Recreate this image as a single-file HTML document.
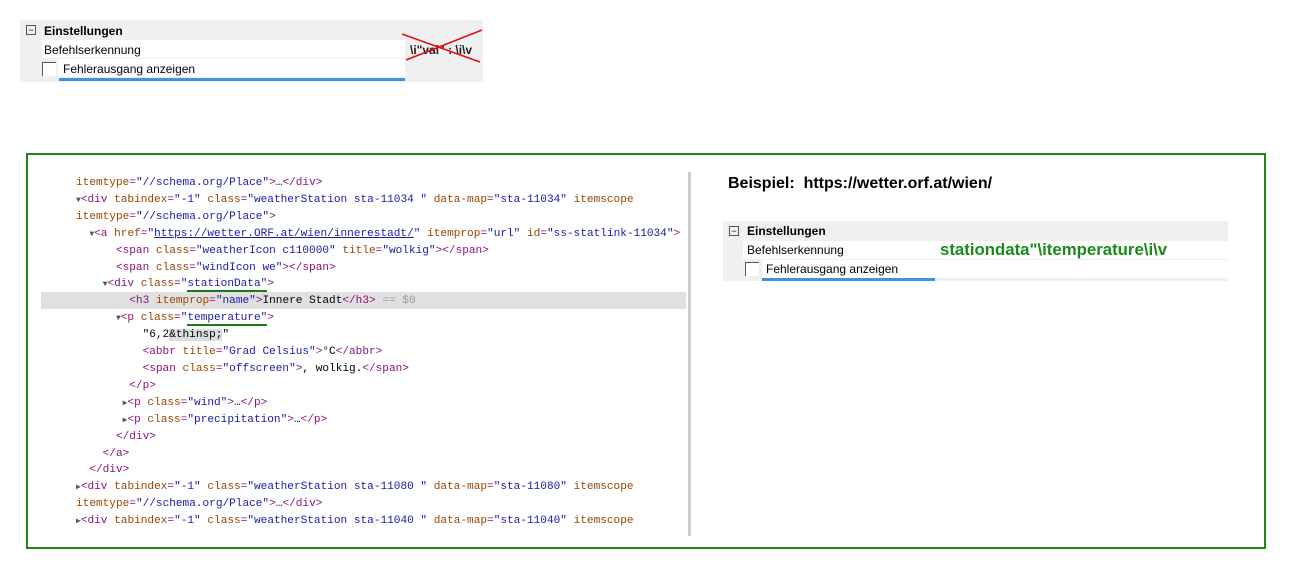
<!DOCTYPE html>
<html><head><meta charset="utf-8"><style>
body{margin:0;width:1290px;height:574px;background:#fff;position:relative;overflow:hidden;font-family:"Liberation Sans",sans-serif}
.a{position:absolute}
.m{font-family:"Liberation Mono",monospace;font-size:11.1px;line-height:16.9px;white-space:pre;color:#000}
.m span{line-height:0}
.t{color:#881280}.n{color:#994500}.v{color:#1a1aa6}.g{color:#999}
.tri{font-size:8px;color:#555}
.ps{font-size:12px;color:#000}
</style></head><body>
<div class="a" style="left:20px;top:20px;width:463px;height:62px;background:#f0f0f0"></div>
<div class="a" style="left:42px;top:40px;width:363px;height:18px;background:#fff"></div>
<div class="a" style="left:58px;top:59px;width:347px;height:18px;background:#fff"></div>
<div class="a" style="left:26px;top:25px;width:8px;height:8px;border:1px solid #555;font-size:9px;line-height:8px;text-align:center">−</div>
<div class="a ps" style="left:44px;top:24px;font-weight:bold">Einstellungen</div>
<div class="a ps" style="left:44px;top:43px">Befehlserkennung</div>
<div class="a" style="left:42px;top:62px;width:13px;height:13px;border:1px solid #555;border-right:none;border-bottom:none;background:#fff"></div>
<div class="a ps" style="left:63px;top:62px">Fehlerausgang anzeigen</div>
<div class="a" style="left:59px;top:78px;width:346px;height:3px;background:#3b95e0"></div>
<div class="a ps" style="left:410px;top:43px;font-weight:bold;color:#222">\i"val" : \i\v</div>
<svg class="a" style="left:400px;top:28px" width="85" height="36"><line x1="2" y1="6" x2="80" y2="34" stroke="#e01010" stroke-width="1.5"/><line x1="6" y1="32" x2="82" y2="2" stroke="#e01010" stroke-width="1.5"/></svg>

<div class="a" style="left:26px;top:153px;width:1236px;height:392px;border:2px solid #1a8a1a"></div>
<div class="a" style="left:688px;top:172px;width:3px;height:364px;background:#ccc"></div>
<div class="a" style="left:41px;top:292px;width:645px;height:17px;background:#e0e0e0"></div>
<div class="a m" style="left:76px;top:175px"><span class="n">itemtype</span><span class="t">=</span><span class="v">"//schema.org/Place"</span><span class="t">&gt;</span>…<span class="t">&lt;/div&gt;</span>
<span class="tri">▼</span><span class="t">&lt;div </span><span class="n">tabindex</span><span class="t">=</span><span class="v">"-1"</span> <span class="n">class</span><span class="t">=</span><span class="v">"weatherStation sta-11034 "</span> <span class="n">data-map</span><span class="t">=</span><span class="v">"sta-11034"</span> <span class="n">itemscope</span>
<span class="n">itemtype</span><span class="t">=</span><span class="v">"//schema.org/Place"</span><span class="t">&gt;</span>
  <span class="tri">▼</span><span class="t">&lt;a </span><span class="n">href</span><span class="t">=</span><span class="v">"<u>https://wetter.ORF.at/wien/innerestadt/</u>"</span> <span class="n">itemprop</span><span class="t">=</span><span class="v">"url"</span> <span class="n">id</span><span class="t">=</span><span class="v">"ss-statlink-11034"</span><span class="t">&gt;</span>
      <span class="t">&lt;span </span><span class="n">class</span><span class="t">=</span><span class="v">"weatherIcon c110000"</span> <span class="n">title</span><span class="t">=</span><span class="v">"wolkig"</span><span class="t">&gt;&lt;/span&gt;</span>
      <span class="t">&lt;span </span><span class="n">class</span><span class="t">=</span><span class="v">"windIcon we"</span><span class="t">&gt;&lt;/span&gt;</span>
    <span class="tri">▼</span><span class="t">&lt;div </span><span class="n">class</span><span class="t">=</span><span class="v">"<span style="border-bottom:2px solid #1a7a1a">stationData"</span></span><span class="t">&gt;</span>
        <span class="t">&lt;h3 </span><span class="n">itemprop</span><span class="t">=</span><span class="v">"name"</span><span class="t">&gt;</span>Innere Stadt<span class="t">&lt;/h3&gt;</span> <span class="g">== $0</span>
      <span class="tri">▼</span><span class="t">&lt;p </span><span class="n">class</span><span class="t">=</span><span class="v">"<span style="border-bottom:2px solid #1a7a1a">temperature"</span></span><span class="t">&gt;</span>
          "6,2<span style="background:#ddd">&amp;thinsp;</span>"
          <span class="t">&lt;abbr </span><span class="n">title</span><span class="t">=</span><span class="v">"Grad Celsius"</span><span class="t">&gt;</span>°C<span class="t">&lt;/abbr&gt;</span>
          <span class="t">&lt;span </span><span class="n">class</span><span class="t">=</span><span class="v">"offscreen"</span><span class="t">&gt;</span>, wolkig.<span class="t">&lt;/span&gt;</span>
        <span class="t">&lt;/p&gt;</span>
       <span class="tri">▶</span><span class="t">&lt;p </span><span class="n">class</span><span class="t">=</span><span class="v">"wind"</span><span class="t">&gt;</span>…<span class="t">&lt;/p&gt;</span>
       <span class="tri">▶</span><span class="t">&lt;p </span><span class="n">class</span><span class="t">=</span><span class="v">"precipitation"</span><span class="t">&gt;</span>…<span class="t">&lt;/p&gt;</span>
      <span class="t">&lt;/div&gt;</span>
    <span class="t">&lt;/a&gt;</span>
  <span class="t">&lt;/div&gt;</span>
<span class="tri">▶</span><span class="t">&lt;div </span><span class="n">tabindex</span><span class="t">=</span><span class="v">"-1"</span> <span class="n">class</span><span class="t">=</span><span class="v">"weatherStation sta-11080 "</span> <span class="n">data-map</span><span class="t">=</span><span class="v">"sta-11080"</span> <span class="n">itemscope</span>
<span class="n">itemtype</span><span class="t">=</span><span class="v">"//schema.org/Place"</span><span class="t">&gt;</span>…<span class="t">&lt;/div&gt;</span>
<span class="tri">▶</span><span class="t">&lt;div </span><span class="n">tabindex</span><span class="t">=</span><span class="v">"-1"</span> <span class="n">class</span><span class="t">=</span><span class="v">"weatherStation sta-11040 "</span> <span class="n">data-map</span><span class="t">=</span><span class="v">"sta-11040"</span> <span class="n">itemscope</span></div>

<div class="a" style="left:728px;top:175px;font-size:16px;font-weight:bold;color:#000">Beispiel:&nbsp; https://wetter.orf.at/wien/</div>
<div class="a" style="left:723px;top:221px;width:505px;height:60px;background:#f0f0f0"></div>
<div class="a" style="left:743px;top:241px;width:485px;height:18px;background:#fff"></div>
<div class="a" style="left:762px;top:260px;width:466px;height:18px;background:#fff"></div>
<div class="a" style="left:729px;top:226px;width:8px;height:8px;border:1px solid #555;font-size:9px;line-height:8px;text-align:center">−</div>
<div class="a ps" style="left:747px;top:224px;font-weight:bold">Einstellungen</div>
<div class="a ps" style="left:747px;top:243px">Befehlserkennung</div>
<div class="a" style="left:745px;top:262px;width:13px;height:13px;border:1px solid #555;border-right:none;border-bottom:none;background:#fff"></div>
<div class="a ps" style="left:766px;top:262px">Fehlerausgang anzeigen</div>
<div class="a" style="left:762px;top:278px;width:173px;height:3px;background:#3b95e0"></div>
<div class="a" style="left:940px;top:240px;font-size:16.8px;font-weight:bold;color:#1a8a1a">stationdata"\itemperature\i\v</div>
</body></html>
